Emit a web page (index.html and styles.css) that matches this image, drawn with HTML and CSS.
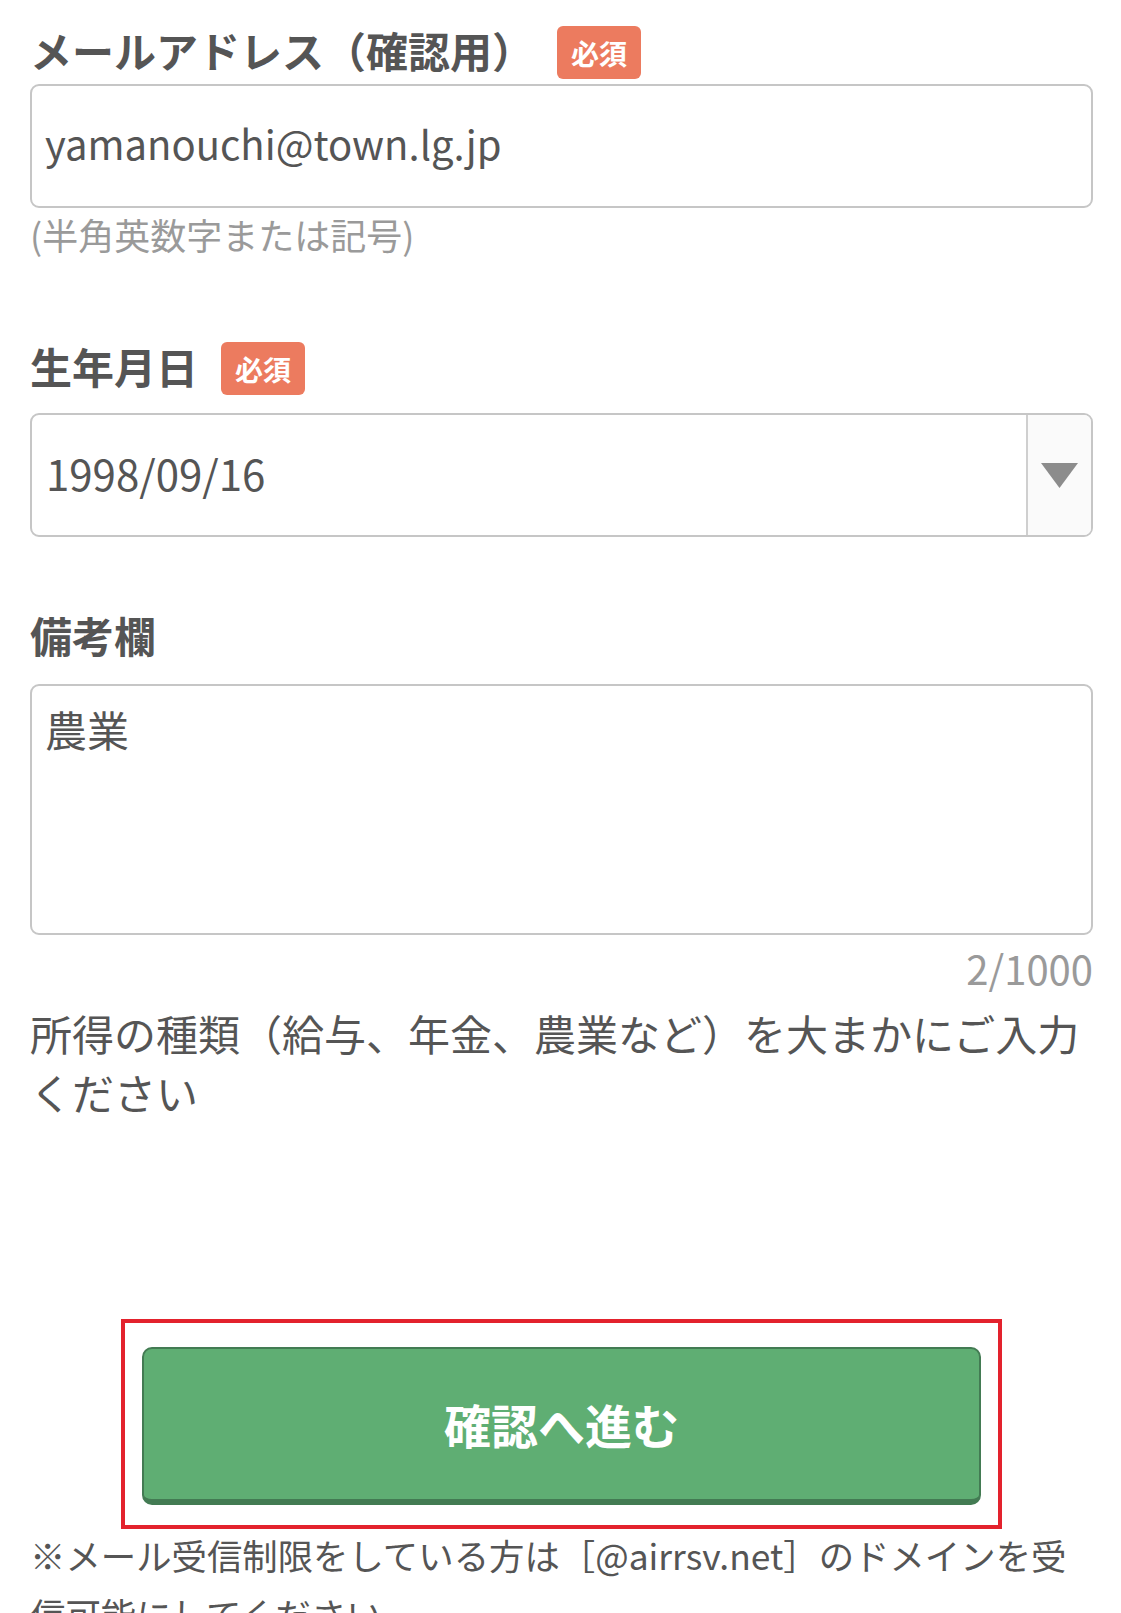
FILE: index.html
```html
<!DOCTYPE html>
<html lang="ja">
<head>
<meta charset="utf-8">
<title>フォーム</title>
<link rel="stylesheet" href="styles.css">
</head>
<body>
<main class="form">
  <section class="field field-email">
    <div class="field-label"><span class="label-text">メールアドレス（確認用）</span><span class="badge">必須</span></div>
    <div class="input">yamanouchi@town.lg.jp</div>
    <p class="hint">(半角英数字または記号)</p>
  </section>

  <section class="field field-birth">
    <div class="field-label"><span class="label-text">生年月日</span><span class="badge">必須</span></div>
    <div class="select">
      <div class="select-value">1998/09/16</div>
      <div class="select-arrow"><svg width="37" height="25" viewBox="0 0 37 25"><polygon points="0,0 37,0 18.5,25" fill="#8c8c8c"/></svg></div>
    </div>
  </section>

  <section class="field field-note">
    <div class="field-label"><span class="label-text">備考欄</span></div>
    <div class="textarea">農業</div>
    <div class="counter">2/1000</div>
    <p class="desc">所得の種類（給与、年金、農業など）を大まかにご入力ください</p>
  </section>

  <div class="submit-wrap">
    <div class="submit-frame">
      <button class="submit" type="button">確認へ進む</button>
    </div>
  </div>

  <p class="notice">※メール受信制限をしている方は［@airrsv.net］のドメインを受信可能にしてください</p>
</main>
</body>
</html>
```

FILE: styles.css
```css
html, body {
  margin: 0;
  padding: 0;
  background: #ffffff;
}

body {
  font-family: "Noto Sans CJK JP", "Noto Sans", sans-serif;
  color: #555555;
}

.form {
  padding: 26px 28px 0 30px;
}

.field-label {
  display: flex;
  align-items: center;
  height: 53px;
  font-size: 42px;
  font-weight: 700;
  color: #555555;
  line-height: 1;
}

.label-text {
  padding-bottom: 6px;
}

.badge {
  display: flex;
  align-items: center;
  justify-content: center;
  margin-left: 23px;
  width: 84px;
  height: 53px;
  border-radius: 6px;
  background: #ec7b5f;
  color: #ffffff;
  font-size: 28px;
  font-weight: 700;
}

.input {
  box-sizing: border-box;
  margin-top: 5px;
  height: 124px;
  border: 2px solid #c6c6c6;
  border-radius: 9px;
  padding: 0 13px 6px;
  display: flex;
  align-items: center;
  font-size: 40px;
  color: #555555;
}

.hint {
  margin: 4px 0 0;
  font-size: 36px;
  line-height: 44px;
  color: #9a9a9a;
}

.field-birth {
  margin-top: 86px;
}

.select {
  box-sizing: border-box;
  margin-top: 18px;
  height: 124px;
  border: 2px solid #c6c6c6;
  border-radius: 9px;
  display: flex;
  overflow: hidden;
}

.select-value {
  flex: 1;
  display: flex;
  align-items: center;
  padding: 0 0 6px 14px;
  font-size: 42px;
  color: #555555;
}

.select-arrow {
  width: 63px;
  border-left: 2px solid #cfcfcf;
  background: #fafafa;
  display: flex;
  align-items: center;
  justify-content: center;
}

.field-note {
  margin-top: 74px;
}

.textarea {
  box-sizing: border-box;
  margin-top: 20px;
  height: 251px;
  border: 2px solid #c6c6c6;
  border-radius: 9px;
  padding: 18px 13px;
  font-size: 42px;
  line-height: 1.2;
  color: #555555;
}

.counter {
  margin-top: 8px;
  text-align: right;
  font-size: 40px;
  line-height: 50px;
  color: #9a9a9a;
}

.desc {
  margin: 10px 0 0;
  font-size: 42px;
  line-height: 59px;
  color: #555555;
}

.submit-wrap {
  display: flex;
  justify-content: center;
  margin-top: 198px;
}

.submit-frame {
  box-sizing: border-box;
  width: 881px;
  border: 4px solid #e3222d;
  padding: 24px 17px 20px;
}

.submit {
  display: block;
  box-sizing: border-box;
  width: 100%;
  height: 158px;
  border: 2px solid #437b53;
  border-bottom-width: 6px;
  border-radius: 10px;
  background: #5fae73;
  color: #ffffff;
  font-family: "Noto Sans CJK JP", sans-serif;
  font-size: 47px;
  font-weight: 700;
  padding: 0 0 2px;
}

.notice {
  margin: -4px 0 0;
  font-size: 35.4px;
  line-height: 59px;
  color: #555555;
}
```
